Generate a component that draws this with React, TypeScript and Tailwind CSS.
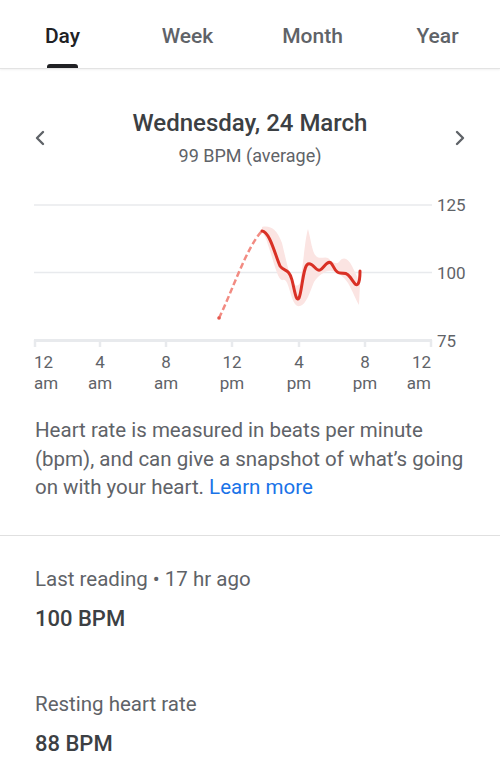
import { ChevronLeft, ChevronRight } from "lucide-react"

const TABS = ["Day", "Week", "Month", "Year"]

const TICKS = [
  { x: 35, top: "12", bottom: "am", anchor: "start" },
  { x: 100, top: "4", bottom: "am", anchor: "middle" },
  { x: 166, top: "8", bottom: "am", anchor: "middle" },
  { x: 232, top: "12", bottom: "pm", anchor: "middle" },
  { x: 299, top: "4", bottom: "pm", anchor: "middle" },
  { x: 365, top: "8", bottom: "pm", anchor: "middle" },
  { x: 431, top: "12", bottom: "am", anchor: "end" },
] as const

function HeartChart() {
  return (
    <svg width="500" height="205" viewBox="0 190 500 205" className="block">
      <g stroke="#e8eaed">
        <line x1="34" x2="432" y1="205" y2="205" strokeWidth="1.5" />
        <line x1="34" x2="432" y1="272.5" y2="272.5" strokeWidth="1.5" />
        <line x1="34" x2="432" y1="340.5" y2="340.5" strokeWidth="3" />
        {TICKS.map((t) => (
          <line key={t.x} x1={t.x} x2={t.x} y1="340" y2="347" strokeWidth="2.5" />
        ))}
      </g>
      <g fill="#5f6368" fontSize="17" fontFamily="Roboto, sans-serif">
        <text x="437" y="211">125</text>
        <text x="437" y="279">100</text>
        <text x="437" y="347">75</text>
        {TICKS.map((t) => (
          <g key={t.x} textAnchor={t.anchor}>
            <text x={t.x - (t.anchor === "start" ? 1 : 0)} y="368">{t.top}</text>
            <text x={t.x - (t.anchor === "start" ? 1 : 0)} y="389">{t.bottom}</text>
          </g>
        ))}
      </g>
      {/* min/max band */}
      <path
        d="M262,227 C270,225 277,229 282,243 C285,255 287,266 290,274 C293,284 296,289 300,283 C303,268 305,238 308,229 C311,240 312,252 316,256 C320,260 324,256 328,258 C332,262 336,265 339,262 C343,256 348,258 352,266 C356,274 359,280 360,284 L359,305 C356,300 353,292 348,283 C343,276 338,272 332,271 C326,270 320,274 314,282 C310,292 306,305 300,306 C296,307 294,303 292,298 C289,289 287,278 283,280 C278,282 274,262 268,245 C266,238 264,234 262,232 Z"
        fill="#fbe4e2"
      />
      <path
        d="M219,318 C232,292 246,248 262,231"
        fill="none"
        stroke="#f28b82"
        strokeWidth="2.5"
        strokeDasharray="6 3"
      />
      <circle cx="219" cy="318" r="1.8" fill="#e5574d" />
      <path
        d="M262,231 C270,232 275,255 280,266 C284,272 289,268 292,280 C295,292 296,302 299,298 C302,292 303,266 308,264 C313,262 316,272 320,270 C324,268 327,260 331,263 C334,266 335,273 340,273 C345,273 347,273 350,277 C353,281 356,287 358,284 C360,281 360,275 360,271"
        fill="none"
        stroke="#d93025"
        strokeWidth="3"
        strokeLinecap="round"
        strokeLinejoin="round"
      />
    </svg>
  )
}

export default function App() {
  return (
    <div className="w-[500px] min-h-[771px] bg-white font-['Roboto',sans-serif] overflow-hidden">
      <header className="h-[69px] grid grid-cols-4 border-b border-[#e3e3e3] shadow-[0_1px_2px_rgba(0,0,0,0.06)]">
        {TABS.map((tab, i) => (
          <div key={tab} className="flex flex-col items-center pt-6">
            <span
              className={`text-[21px] leading-6 font-medium ${
                i === 0 ? "text-[#202124]" : "text-[#5f6368]"
              }`}
            >
              {tab}
            </span>
            {i === 0 && <div className="mt-auto w-[31px] h-1 rounded-t-[3px] bg-[#202124]" />}
          </div>
        ))}
      </header>

      <section className="mt-10 flex items-center justify-between px-7">
        <ChevronLeft className="w-6 h-6 text-[#5f6368]" strokeWidth={2.4} />
        <div className="flex flex-col items-center">
          <h1 className="text-[24px] leading-7 text-[#3c4043] font-medium">Wednesday, 24 March</h1>
          <p className="mt-2 text-[18px] leading-[22px] text-[#5f6368]">99 BPM (average)</p>
        </div>
        <ChevronRight className="w-6 h-6 text-[#5f6368]" strokeWidth={2.4} />
      </section>

      <div className="mt-[23px]">
        <HeartChart />
      </div>

      <p className="mt-[21px] px-[35px] pb-[33px] text-[20.5px] leading-[28.5px] text-[#5f6368] border-b border-[#e0e0e0]">
        Heart rate is measured in beats per minute (bpm), and can give a snapshot of what’s going
        on with your heart. <span className="text-[#1a73e8]">Learn more</span>
      </p>

      <section className="px-[35px] pt-[31px]">
        <p className="text-[20.5px] leading-6 text-[#5f6368]">Last reading • 17 hr ago</p>
        <p className="mt-[14px] text-[22px] leading-7 text-[#3c4043] font-medium">100 BPM</p>
        <p className="mt-[59px] text-[20.5px] leading-6 text-[#5f6368]">Resting heart rate</p>
        <p className="mt-[14px] text-[22px] leading-7 text-[#3c4043] font-medium">88 BPM</p>
      </section>
    </div>
  )
}
